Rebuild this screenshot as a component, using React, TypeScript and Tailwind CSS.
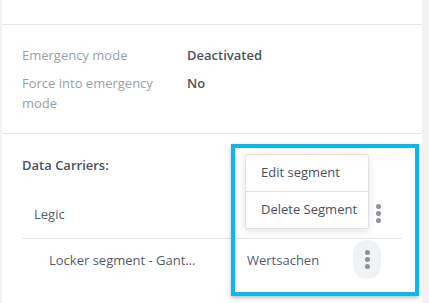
// Device detail card, cropped: emergency settings and the data carriers list with
// an open row menu. The cyan frame is a screenshot annotation drawn over it.
const FONT = { fontFamily: '"Open Sans", "Noto Sans", sans-serif' };

function Kebab({ filled = false }: { filled?: boolean }) {
  return (
    <span
      className={`flex h-[39px] w-[28px] items-center justify-center rounded-full ${filled ? 'bg-[#f1f2f3]' : ''}`}
    >
      <span className="flex flex-col gap-[2px]">
        <span className="h-[5px] w-[5px] rounded-full bg-[#8d929b]" />
        <span className="h-[5px] w-[5px] rounded-full bg-[#8d929b]" />
        <span className="h-[5px] w-[5px] rounded-full bg-[#8d929b]" />
      </span>
    </span>
  );
}

export default function App() {
  return (
    <div className="relative flex h-[303px] w-[429px] overflow-hidden bg-[#f2f2f2]" style={FONT}>
      <div className="ml-[2px] w-[420px] bg-white">
        <div className="h-[25px] border-b border-[#e6e6e6]" />

        <div className="grid grid-cols-[165px_1fr] gap-y-[8px] border-b border-[#e6e6e6] px-[20px] pb-[20px] pt-[20px] text-[13px] leading-[20px]">
          <span className="text-[#9a9fa7]">Emergency mode</span>
          <span className="font-semibold text-[#4b5160]">Deactivated</span>
          <span className="pr-[12px] text-[#9a9fa7]">Force into emergency mode</span>
          <span className="font-semibold text-[#4b5160]">No</span>
        </div>

        <div className="px-[20px] pt-[21px] text-[13px] leading-[20px]">
          <div className="font-semibold text-[#4b5160]">Data Carriers:</div>
          <div className="flex h-[64px] items-center justify-between border-b border-[#e3e3e3] pl-[12px] pr-[10px] pt-[14px]">
            <span className="text-[#555b68]">Legic</span>
            <Kebab />
          </div>
          <div className="flex h-[41px] items-center pl-[27px] pr-[21px]">
            {/* the name column is clipped in the app; the visible part is kept as text */}
            <span className="w-[198px] whitespace-nowrap text-[#555b68]">Locker segment - Gant…</span>
            <span className="flex-1 text-[#555b68]">Wertsachen</span>
            <Kebab filled />
          </div>
        </div>
      </div>

      <div className="absolute left-[245px] top-[154px] w-[124px] rounded-[2px] border border-[#e3e3e3] bg-white text-[13px] text-[#4b5160] shadow-[0_2px_8px_rgba(0,0,0,0.12)]">
        <div className="flex h-[37px] items-center border-b border-[#e3e3e3] pl-[15px]">Edit segment</div>
        <div className="flex h-[36px] items-center pl-[15px]">Delete Segment</div>
      </div>

      <div className="absolute left-[231px] top-[144px] h-[152px] w-[188px] border-[4px] border-[#0fb6ea] shadow-[0_2px_4px_rgba(0,0,0,0.25)]" />
    </div>
  );
}
